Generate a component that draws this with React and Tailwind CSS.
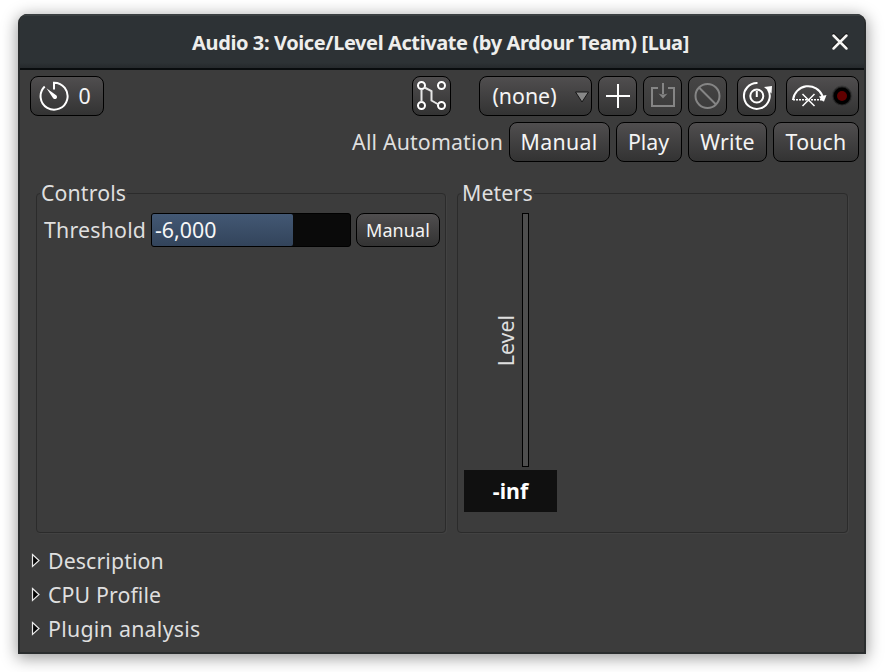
import React from "react";

function Button({ className = "", dim = false, children }) {
  return (
    <div
      className={`flex shrink-0 items-center justify-center rounded-[8px] border border-black bg-linear-to-b whitespace-nowrap text-[#f4f4f4] ${
        dim ? "from-[#464545] to-[#3a3a3a]" : "from-[#504e4f] to-[#333333]"
      } ${className}`}
    >
      {children}
    </div>
  );
}

function LatencyIcon() {
  return (
    <svg width="30" height="30" viewBox="0 0 30 30" fill="none" stroke="#fff" strokeWidth="2">
      <path d="M15 8.500V1.700A13.500 13.500 0 1 1 5.700 5.500" />
      <path d="M7.500 7.200L17.200 14.200A2.200 2.200 0 1 1 13.800 16.800Z" fill="#fff" stroke="none" />
    </svg>
  );
}

function RoutingIcon() {
  return (
    <svg width="37" height="38" viewBox="413 77 37 38" fill="none" stroke="#fff" strokeWidth="2">
      <circle cx="421.500" cy="85.500" r="3.500" />
      <circle cx="441.500" cy="85.500" r="3.500" />
      <circle cx="421.500" cy="105.500" r="3.500" />
      <circle cx="441.500" cy="105.500" r="3.500" />
      <path d="M421.500 89V102M424.500 87.500L431.500 91V100.500L438.500 104.500" stroke="#e6e6e6" />
    </svg>
  );
}

function ResetIcon() {
  return (
    <svg width="37" height="38" viewBox="738 77 37 38" fill="none" stroke="#fff" strokeWidth="2">
      <path d="M757.500 83.100A12.900 12.900 0 1 0 768 89.500" />
      <path d="M764 87L772 86L771.500 93.500Z" fill="#fff" stroke="none" />
      <circle cx="756.800" cy="96" r="6.500" />
      <path d="M756.800 91V97" />
    </svg>
  );
}

function BypassIcon() {
  return (
    <svg width="71" height="38" viewBox="787 77 71 38" fill="none" stroke="#fff">
      <path d="M793 100A15.300 15.300 0 0 1 822.500 96" strokeWidth="2" />
      <path d="M819 96.500L826.500 95L824 101.500Q822 101.500 819 96.500Z" fill="#fff" stroke="none" />
      <path d="M793 99.800H822" strokeWidth="1.500" strokeDasharray="2 1" />
      <path d="M802.500 94L814.500 106M814.500 94L802.500 106" strokeWidth="1.500" />
      <circle cx="842" cy="96" r="10" fill="#242424" stroke="#3a3a3a" />
      <circle cx="842" cy="96" r="8.500" fill="#000" stroke="none" />
      <circle cx="842" cy="96" r="5" fill="#600000" stroke="none" />
    </svg>
  );
}

function TitleBar() {
  return (
    <div className="relative flex h-[56px] items-center justify-center border-b-2 border-[#090c0e] bg-linear-to-b from-[#2d3235] from-90% to-[#25292c] shadow-[inset_0_2px_0_#3a3f41]">
      <h1 className="mr-[3px] mt-[3px] text-[20px] leading-[28px] font-bold tracking-[-0.4px] whitespace-nowrap text-[#eeeeec]">
        Audio 3: Voice/Level Activate (by Ardour Team) [Lua]
      </h1>
      <svg className="absolute top-[18px] right-[14px]" width="20" height="20" viewBox="0 0 20 20" fill="none" strokeLinecap="round">
        <path d="M3.500 2.500L16.500 15.500M16.500 2.500L3.500 15.500" stroke="#111" strokeWidth="3" />
        <path d="M3.500 3.500L16.500 16.500M16.500 3.500L3.500 16.500" stroke="#f4f4f2" strokeWidth="2.500" />
      </svg>
    </div>
  );
}

function Toolbar() {
  return (
    <div className="flex flex-col gap-[6px] pt-[6px] pr-[5px] pl-[10px]">
      <div className="flex h-[40px]">
        <Button className="w-[74px] gap-[9px] pr-[4px]">
          <LatencyIcon />
          <span className="pb-[2px]">0</span>
        </Button>
        <Button className="ml-auto w-[39px]">
          <RoutingIcon />
        </Button>
        <Button className="ml-[28px] w-[113px] gap-[17px] pl-[11px]">
          <span className="pb-[2px]">(none)</span>
          <svg className="mt-[2px]" width="16" height="14" viewBox="0 0 16 14">
            <path d="M1.500 2H14.500L8 12Z" fill="#888" stroke="#161616" />
          </svg>
        </Button>
        <Button className="ml-[6px] w-[39px]">
          <svg width="37" height="38" viewBox="0 0 37 38" stroke="#fff" strokeWidth="2">
            <path d="M7 19H31M19 7V31" />
          </svg>
        </Button>
        <Button dim className="ml-[6px] w-[39px]">
          <svg width="37" height="38" viewBox="644 77 37 38" fill="none" stroke="#858585" strokeWidth="2">
            <path d="M658 88H652V106H674V88H668M663 83V94" />
            <path d="M658.500 93.500Q663 95.500 667.500 93.500L663 98.500Z" fill="#858585" stroke="none" />
          </svg>
        </Button>
        <Button dim className="ml-[6px] w-[39px]">
          <svg width="37" height="38" viewBox="689 77 37 38" fill="none" stroke="#858585" strokeWidth="2">
            <circle cx="707.500" cy="96" r="12" />
            <path d="M699 87.500L716 104.500" />
          </svg>
        </Button>
        <Button className="ml-[10px] w-[39px]">
          <ResetIcon />
        </Button>
        <Button className="ml-[10px] w-[73px]">
          <BypassIcon />
        </Button>
      </div>
      <div className="flex h-[40px] items-center justify-end gap-[6px]">
        <span className="pb-[2px] tracking-[0.150px]">All Automation</span>
        <Button className="h-[40px] w-[101px] pr-[1px] pb-[2px] tracking-[0.3px]">Manual</Button>
        <Button className="h-[40px] w-[66px] pr-[1px] pb-[2px]">Play</Button>
        <Button className="h-[40px] w-[79px] pb-[2px] tracking-[0.2px]">Write</Button>
        <Button className="h-[40px] w-[86px] pb-[2px] tracking-[0.2px]">Touch</Button>
      </div>
    </div>
  );
}

function Frame({ title, className, children }) {
  return (
    <section className={`h-[340px] rounded-[4px] border border-[#2b2b2b] shadow-[1px_1px_0_#424242] ${className}`}>
      <h2 className="-mt-[16px] ml-[3px] h-[30px] w-fit bg-[#3c3c3c] px-px leading-[30px] tracking-[0.1px]">{title}</h2>
      {children}
    </section>
  );
}

function Controls() {
  return (
    <Frame title="Controls" className="w-[410px]">
      <div className="mt-[5px] flex h-[34px] items-center pl-[7px]">
        <span className="w-[107px] pb-[2px] tracking-[0.2px]">Threshold</span>
        <div className="flex h-[34px] w-[200px] items-center overflow-hidden rounded-[3px] border border-black bg-[#0a0a0a]">
          <div className="flex h-full w-[141px] items-center rounded-r-[2px] bg-linear-to-b from-[#435874] to-[#33445b] pb-[2px] pl-[3px] text-[#f6f6f6]">
            -6,000
          </div>
        </div>
        <Button className="ml-[5px] h-[34px] w-[84px] text-[18px] tracking-[0.1px]">Manual</Button>
      </div>
    </Frame>
  );
}

function Meters() {
  return (
    <Frame title="Meters" className="w-[391px]">
      <div className="mt-[5px] flex h-[254px] items-center pl-[34px]">
        <span className="mt-[2px] mr-[2px] w-[28px] rotate-180 leading-[28px] [writing-mode:vertical-rl]">Level</span>
        <div className="h-full w-[7px] border border-black bg-[#4e4e4e]" />
      </div>
      <div className="mt-[3px] ml-[6px] flex h-[42px] w-[93px] items-center justify-center bg-[#101010] pb-[2px] font-bold text-white">
        -inf
      </div>
    </Frame>
  );
}

function Expander({ label, className = "" }) {
  return (
    <div className="flex h-[34px] items-center">
      <svg className="mr-[8px]" width="9" height="16" viewBox="0 0 9 16">
        <path d="M1.500 1.500L8 7.500L1.500 13.500Z" fill="#050505" stroke="#e8e8e8" strokeWidth="1.200" />
      </svg>
      <span className={`pb-[2px] ${className}`}>{label}</span>
    </div>
  );
}

export default function App() {
  return (
    <div className="h-[672px] w-[885px] overflow-hidden bg-white pt-[14px] pl-[18px] font-['Noto_Sans',sans-serif] text-[21.330px] leading-[29px] text-[#dfdfdf]">
      <main className="h-[640px] w-[848px] overflow-hidden rounded-t-[9px] border-x-2 border-b-2 border-[#2a2d2e] bg-[#3c3c3c] shadow-[0_3px_16px_1px_rgba(0,0,0,0.4)]">
        <TitleBar />
        <Toolbar />
        <div className="mt-[31px] flex gap-[11px] pl-[16px]">
          <Controls />
          <Meters />
        </div>
        <div className="mt-[11px] pl-[11px]">
          <Expander label="Description" className="tracking-[0.1px]" />
          <Expander label="CPU Profile" className="tracking-[0.1px]" />
          <Expander label="Plugin analysis" className="tracking-[0.280px]" />
        </div>
      </main>
    </div>
  );
}
